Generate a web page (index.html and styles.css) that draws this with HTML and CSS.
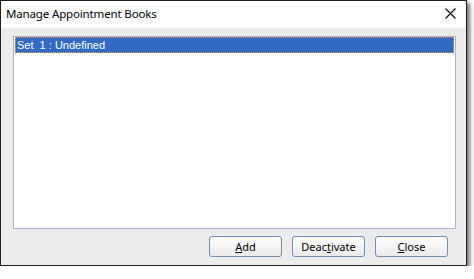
FILE: index.html
```html
<!DOCTYPE html>
<html lang="en">
<head>
  <meta charset="UTF-8">
  <title>Manage Appointment Books</title>
  <link rel="stylesheet" href="styles.css">
</head>
<body>
  <div class="window">
    <div class="titlebar">
      <span class="title">Manage Appointment Books</span>
      <svg class="close-x" width="11" height="11" viewBox="0 0 11 11">
        <path d="M0.5 0.5 L10.5 10.5 M10.5 0.5 L0.5 10.5" stroke="#000" stroke-width="1.1" fill="none"/>
      </svg>
    </div>
    <div class="content">
      <div class="listbox">
        <div class="list-item selected">Set&nbsp; 1 : Undefined</div>
      </div>
      <div class="buttons">
        <button class="btn"><u>A</u>dd</button>
        <button class="btn">Deac<u>t</u>ivate</button>
        <button class="btn"><u>C</u>lose</button>
      </div>
    </div>
  </div>
</body>
</html>
```

FILE: styles.css
```css
body {
  margin: 0;
  background: #fff;
  font-family: "Noto Sans", "DejaVu Sans", sans-serif;
  font-size: 12px;
}
.window {
  width: 465px;
  height: 264px;
  border: 1px solid #1e1e1e;
  background: #ececec;
  display: flex;
  flex-direction: column;
  box-shadow: 3px 3px 4px rgba(0, 0, 0, 0.55);
}
.titlebar {
  height: 29px;
  background: #fff;
  display: flex;
  align-items: center;
  justify-content: space-between;
  padding: 0 10px 0 5px;
}
.title {
  color: #000;
  font-size: 11.5px;
  letter-spacing: -0.15px;
  margin-top: -3px;
}
.close-x {
  margin-top: -2px;
}
.content {
  flex: 1;
  display: flex;
  flex-direction: column;
  padding: 8px 10px 8px 12px;
}
.listbox {
  height: 191px;
  border: 1px solid #abb0d6;
  background: #fff;
  padding: 0 1px;
}
.list-item {
  height: 14px;
  line-height: 14px;
  padding-left: 2px;
  color: #fff;
  font-family: "Liberation Sans", Arial, sans-serif;
  font-size: 11px;
}
.selected {
  background: #316ac5;
  outline: 1px dotted #e8a040;
  outline-offset: -1px;
  height: 16px;
  line-height: 16px;
}
.buttons {
  margin-top: 7px;
  display: flex;
  justify-content: flex-end;
  gap: 10px;
  padding-right: 8px;
}
.btn {
  width: 73px;
  height: 21px;
  border: 1px solid #6f8fb4;
  border-radius: 3px;
  background: linear-gradient(#fdfdfd, #ebebeb);
  font-family: "Noto Sans", "DejaVu Sans", sans-serif;
  font-size: 11px;
  color: #000;
  padding: 0;
  line-height: 17px;
}
```
